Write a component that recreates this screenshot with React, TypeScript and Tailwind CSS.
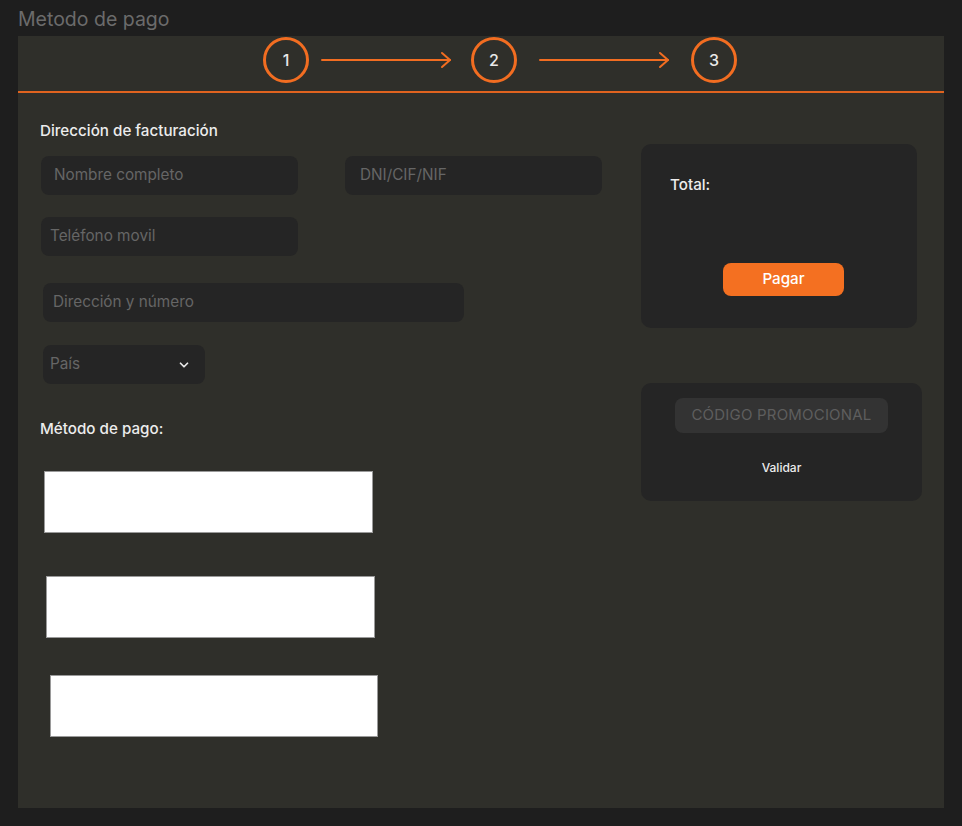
import { ChevronDown } from 'lucide-react';
import React from 'react';

const orange = '#f26d21';

function Step({ n }: { n: number }) {
  return (
    <div className="w-[46px] h-[46px] rounded-full border-[3px] border-[#f26d21] flex items-center justify-center text-[16px] font-medium text-[#e8e8e8]">
      {n}
    </div>
  );
}

function Arrow() {
  return (
    <svg width="132" height="20" viewBox="0 0 132 20" fill="none">
      <path d="M1 10 H129" stroke={orange} strokeWidth="2" strokeLinecap="round" />
      <path d="M121 3 L129 10 L121 17" stroke={orange} strokeWidth="2" strokeLinecap="round" strokeLinejoin="round" />
    </svg>
  );
}

function Field({ text, className }: { text: string; className: string }) {
  return (
    <div className={`h-[39px] rounded-[8px] bg-[#252525] flex items-center text-[15.3px] text-[#666666] ${className}`}>
      {text}
    </div>
  );
}

export default function App() {
  return (
    <div
      className="w-[962px] h-[826px] bg-[#1e1e1e] px-[18px] flex flex-col"
      style={{ fontFamily: 'Inter, "Noto Sans", sans-serif' }}
    >
      <div className="h-[36px] flex items-center text-[19.5px] text-[#6b6b6b] pt-[4px]">Metodo de pago</div>

      <div className="w-[926px] h-[772px] bg-[#2f2f2a] flex flex-col">
        {/* stepper */}
        <div className="h-[57px] border-b-2 border-[#e0631f] flex items-start pt-[1px] pl-[245px]">
          <Step n={1} />
          <div className="ml-[12px] mt-[13px]"><Arrow /></div>
          <div className="ml-[18px]"><Step n={2} /></div>
          <div className="ml-[22px] mt-[13px]"><Arrow /></div>
          <div className="ml-[20px]"><Step n={3} /></div>
        </div>

        <div className="flex">
          {/* left form */}
          <div className="w-[623px] flex flex-col">
            <div className="mt-[29px] ml-[22px] h-[18px] text-[15.2px] font-medium text-[#ececec] leading-[18px]">
              Dirección de facturación
            </div>
            <div className="mt-[16px] flex gap-[47px] ml-[23px]">
              <Field text="Nombre completo" className="w-[257px] pl-[13px]" />
              <Field text="DNI/CIF/NIF" className="w-[257px] pl-[15px]" />
            </div>
            <Field text="Teléfono movil" className="mt-[22px] ml-[23px] w-[257px] pl-[9px]" />
            <Field text="Dirección y número" className="mt-[27px] ml-[25px] w-[421px] pl-[10px] h-[38px]" />
            <div className="mt-[23px] ml-[25px] w-[162px] h-[39px] rounded-[8px] bg-[#252525] flex items-center justify-between pl-[7px] pr-[14px] text-[15.3px] text-[#666666]">
              <span>País</span>
              <ChevronDown size={14} strokeWidth={3} className="text-[#e8e8e8]" />
            </div>
            <div className="mt-[36px] ml-[22px] h-[18px] text-[15.2px] font-medium text-[#ececec] leading-[18px]">
              Método de pago:
            </div>
            <div className="mt-[33px] ml-[26px] w-[329px] h-[62px] bg-white border border-[#9a9a9a]" />
            <div className="mt-[43px] ml-[28px] w-[329px] h-[62px] bg-white border border-[#9a9a9a]" />
            <div className="mt-[37px] ml-[32px] w-[328px] h-[62px] bg-white border border-[#9a9a9a]" />
          </div>

          {/* right column */}
          <div className="flex flex-col">
            <div className="mt-[51px] w-[276px] h-[184px] rounded-[10px] bg-[#252525] flex flex-col">
              <div className="mt-[32px] ml-[29px] text-[15.2px] font-medium text-[#ececec] leading-[18px]">Total:</div>
              <div className="mt-[69px] ml-[82px] w-[121px] h-[33px] rounded-[8px] bg-[#f47021] flex items-center justify-center text-[15.2px] font-medium text-white">
                Pagar
              </div>
            </div>
            <div className="mt-[55px] w-[281px] h-[118px] rounded-[10px] bg-[#252525] flex flex-col">
              <div className="mt-[15px] ml-[34px] w-[213px] h-[35px] rounded-[8px] bg-[#333333] flex items-center justify-center text-[15px] text-[#5e5e5e] tracking-[0.2px]">
                CÓDIGO PROMOCIONAL
              </div>
              <div className="mt-[26px] ml-[34px] w-[213px] text-center text-[12px] font-medium text-[#ececec]">Validar</div>
            </div>
          </div>
        </div>
      </div>
    </div>
  );
}
